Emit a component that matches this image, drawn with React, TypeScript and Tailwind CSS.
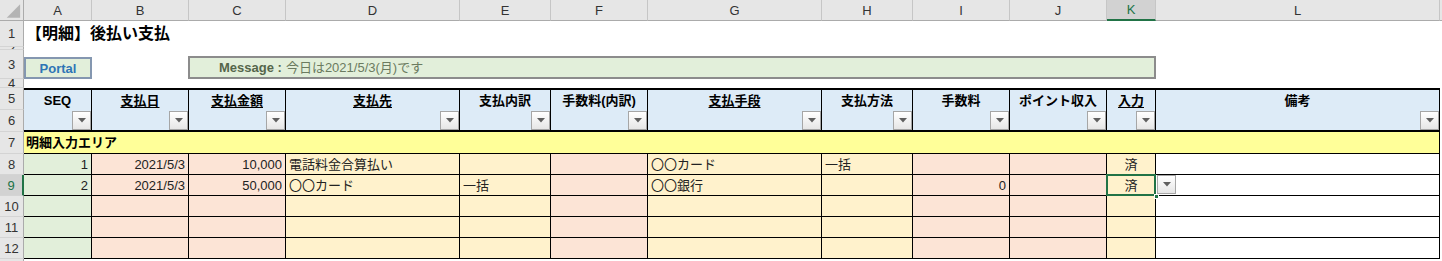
const COLS = [
  { k: "A", w: "w-[68px]" },
  { k: "B", w: "w-[97px]" },
  { k: "C", w: "w-[97px]" },
  { k: "D", w: "w-[174px]" },
  { k: "E", w: "w-[91px]" },
  { k: "F", w: "w-[97px]" },
  { k: "G", w: "w-[174px]" },
  { k: "H", w: "w-[91px]" },
  { k: "I", w: "w-[97px]" },
  { k: "J", w: "w-[97px]" },
  { k: "K", w: "w-[49px]" },
  { k: "L", w: "w-[284px]" },
];

const HEADERS = [
  { label: "SEQ", u: false },
  { label: "支払日", u: true },
  { label: "支払金額", u: true },
  { label: "支払先", u: true },
  { label: "支払内訳", u: false },
  { label: "手数料(内訳)", u: false },
  { label: "支払手段", u: true },
  { label: "支払方法", u: false },
  { label: "手数料", u: false },
  { label: "ポイント収入", u: false },
  { label: "入力", u: true },
  { label: "備考", u: false },
];

const BG = [
  "bg-[#e2efda]",
  "bg-[#fce4d6]",
  "bg-[#fce4d6]",
  "bg-[#fff2cc]",
  "bg-[#fff2cc]",
  "bg-[#fce4d6]",
  "bg-[#fff2cc]",
  "bg-[#fff2cc]",
  "bg-[#fce4d6]",
  "bg-[#fce4d6]",
  "bg-[#fff2cc]",
  "bg-white",
];

// alignment per column: r = right, l = left, c = center
const ALIGN = ["r", "r", "r", "l", "l", "l", "l", "l", "r", "r", "c", "l"];

const DATA: string[][] = [
  ["1", "2021/5/3", "10,000", "電話料金合算払い", "", "", "〇〇カード", "一括", "", "", "済", ""],
  ["2", "2021/5/3", "50,000", "〇〇カード", "一括", "", "〇〇銀行", "", "0", "", "済", ""],
  ["", "", "", "", "", "", "", "", "", "", "", ""],
  ["", "", "", "", "", "", "", "", "", "", "", ""],
  ["", "", "", "", "", "", "", "", "", "", "", ""],
];

const ROW_HEADS = [
  { n: "1", h: "h-[26px]" },
  { n: "2", h: "h-[3px]" },
  { n: "3", h: "h-[29px]" },
  { n: "4", h: "h-[9px]" },
  { n: "5", h: "h-[22px]" },
  { n: "6", h: "h-[22px]" },
  { n: "7", h: "h-[22px]" },
  { n: "8", h: "h-[21px]" },
  { n: "9", h: "h-[21px]", sel: true },
  { n: "10", h: "h-[21px]" },
  { n: "11", h: "h-[21px]" },
  { n: "12", h: "h-[21px]" },
  { n: "13", h: "h-[21px]" },
];

function FilterButton() {
  return (
    <div className="w-[19px] h-[19px] border border-[#a6a6a6] bg-gradient-to-b from-white to-[#e6e6e6] flex items-center justify-center">
      <svg width="8" height="5" viewBox="0 0 8 5">
        <polygon points="0,0 8,0 4,4.5" fill="#5f5f5f" />
      </svg>
    </div>
  );
}

export default function App() {
  return (
    <div className="w-[1442px] h-[261px] overflow-hidden bg-white text-[#222] font-['Liberation_Sans','Noto_Sans_CJK_JP',sans-serif] text-[13px] leading-none">
      {/* Column letters */}
      <div className="flex h-[21px]">
        <div className="w-[24px] h-full bg-[#e6e6e6] border-r border-b border-[#ababab] flex items-end justify-end">
          <svg width="24" height="21" viewBox="0 0 24 21">
            <polygon points="7,19 21,19 21,5" fill="#b4b4b4" />
          </svg>
        </div>
        {COLS.map((c) =>
          c.k === "K" ? (
            <div
              key={c.k}
              className={`${c.w} h-full bg-[#d2d2d2] border-r border-[#c6c6c6] border-b-2 border-b-[#217346] flex items-center justify-center text-[#217346] text-[13px]`}
            >
              {c.k}
            </div>
          ) : (
            <div
              key={c.k}
              className={`${c.w} h-full bg-[#e6e6e6] border-r border-[#c6c6c6] border-b border-b-[#ababab] flex items-center justify-center text-[#333] text-[13px]`}
            >
              {c.k}
            </div>
          )
        )}
        <div className="flex-1 h-full bg-[#e6e6e6] border-b border-[#ababab]" />
      </div>

      <div className="flex">
        {/* Row numbers */}
        <div className="w-[24px] flex flex-col shrink-0">
          {ROW_HEADS.map((r) => (
            <div
              key={r.n}
              className={`${r.h} overflow-hidden flex items-center justify-center border-b border-[#d4d4d4] text-[13px] ${
                r.sel
                  ? "bg-[#d2d2d2] border-r-2 border-r-[#217346] text-[#217346]"
                  : "bg-[#e6e6e6] border-r border-r-[#ababab] text-[#333]"
              }`}
            >
              {r.n}
            </div>
          ))}
        </div>

        {/* Sheet content */}
        <div className="flex flex-col">
          {/* Row 1 */}
          <div className="h-[26px] flex items-center pl-[2px] text-[16px] font-bold text-black">
            【明細】後払い支払
          </div>
          {/* Row 2 */}
          <div className="h-[3px]" />
          {/* Row 3 */}
          <div className="h-[29px] flex items-end">
            <div className="w-[68px] h-[22px] bg-[#e2efda] border-2 border-[#8497b0] flex items-center justify-center text-[#2e75b6] font-bold text-[13px]">
              Portal
            </div>
            <div className="ml-[96px] w-[968px] h-[23px] bg-[#e2efda] border-2 border-[#8c8c8c] flex items-center pl-[29px] text-[13px]">
              <span className="font-bold text-[#55664a]">Message :</span>
              <span className="ml-[4px] text-[#6b7b60]">今日は2021/5/3(月)です</span>
            </div>
          </div>
          {/* Row 4 */}
          <div className="h-[9px]" />

          {/* Rows 5-6: header */}
          <div className="flex h-[44px] border-t-2 border-b-2 border-black bg-[#ddebf7]">
            {COLS.map((c, i) => (
              <div key={c.k} className={`${c.w} h-full border-r border-black flex flex-col justify-between`}>
                <div className={`h-[20px] flex items-center justify-center font-bold text-black ${HEADERS[i].u ? "underline underline-offset-2" : ""}`}>
                  {HEADERS[i].label}
                </div>
                <div className="self-end">
                  <FilterButton />
                </div>
              </div>
            ))}
          </div>

          {/* Row 7 */}
          <div className="w-[1416px] h-[22px] bg-[#ffff99] border-r border-b border-black flex items-center pl-[2px] font-bold text-black">
            明細入力エリア
          </div>

          {/* Rows 8-12 */}
          {DATA.map((row, ri) => (
            <div key={ri} className="flex h-[21px]">
              {COLS.map((c, ci) => {
                const a = ALIGN[ci];
                const selected = ri === 1 && c.k === "K";
                return (
                  <div
                    key={c.k}
                    className={`${c.w} h-full border-r border-b border-black ${BG[ci]} flex items-center px-[3px] text-[#222] ${
                      a === "r" ? "justify-end" : a === "c" ? "justify-center" : "justify-start"
                    } ${selected ? "relative" : ""}`}
                  >
                    {row[ci]}
                    {selected && (
                      <>
                        <div className="absolute -left-[1px] -top-[1px] w-[50px] h-[22px] border-2 border-[#217346]" />
                        <div className="absolute -right-[4px] -bottom-[4px] w-[5px] h-[5px] bg-[#217346] border border-white" />
                        <div className="absolute left-[50px] top-[0px]">
                          <FilterButton />
                        </div>
                      </>
                    )}
                  </div>
                );
              })}
            </div>
          ))}
        </div>
      </div>
    </div>
  );
}
